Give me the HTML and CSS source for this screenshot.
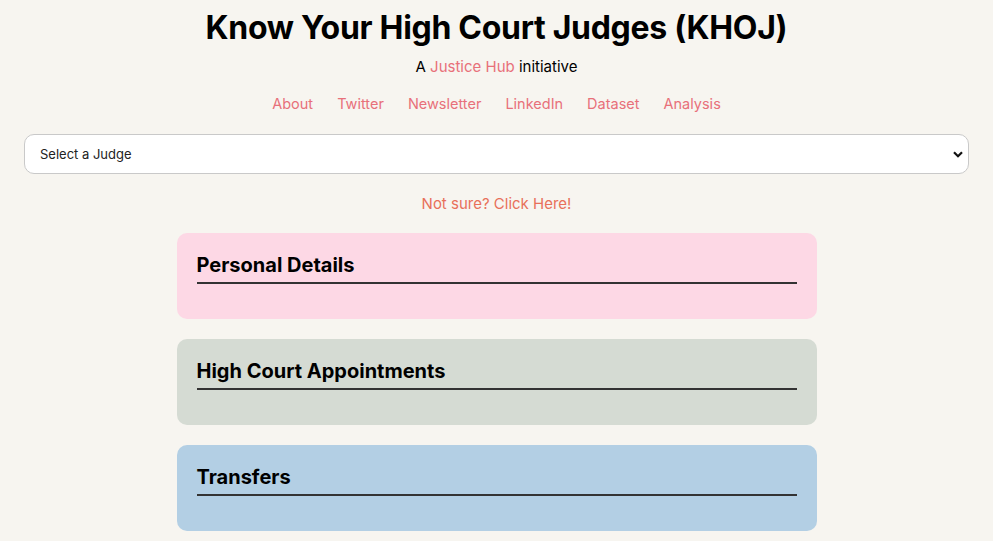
FILE: index.html
```html
<!DOCTYPE html>
<html lang="en">
<head>
<meta charset="utf-8">
<title>KHOJ</title>
<link rel="stylesheet" href="styles.css">
</head>
<body>
<header class="header">
  <h1 class="title">Know Your High Court Judges (KHOJ)</h1>
  <p class="subtitle">A <a class="accent" href="#">Justice Hub</a> initiative</p>
  <nav class="nav">
    <a href="#">About</a>
    <a href="#">Twitter</a>
    <a href="#">Newsletter</a>
    <a href="#">LinkedIn</a>
    <a href="#">Dataset</a>
    <a href="#">Analysis</a>
  </nav>
</header>
<div class="select-wrap">
  <div class="select">
    <span class="select-label">Select a Judge</span>
    <svg class="chev" width="10" height="7" viewBox="0 0 10 7"><path d="M1 1.2 L5 5.2 L9 1.2" fill="none" stroke="#111" stroke-width="2.2"/></svg>
  </div>
</div>
<p class="unsure"><a href="#">Not sure? Click Here!</a></p>
<main class="cards">
  <section class="card pink"><h2>Personal Details</h2></section>
  <section class="card grey"><h2>High Court Appointments</h2></section>
  <section class="card blue"><h2>Transfers</h2></section>
</main>
</body>
</html>
```
FILE: styles.css
```css
* { box-sizing: border-box; }
body {
  margin: 0;
  background: #f7f5f0;
  font-family: Inter, "Noto Sans", sans-serif;
  color: #000;
}
a { text-decoration: none; }
.header { text-align: center; padding-top: 8px; }
.title {
  margin: 0;
  font-size: 32px;
  font-weight: 700;
  line-height: 40px;
  letter-spacing: -0.3px;
}
.subtitle {
  margin: 9px 0 0;
  font-size: 15px;
  line-height: 20px;
}
.accent { color: #e8707a; }
.nav {
  display: flex;
  justify-content: center;
  gap: 24px;
  margin-top: 17px;
  font-size: 14.5px;
  line-height: 20px;
}
.nav a { color: #e8707a; }
.select-wrap { padding: 20px 24px 0; }
.select {
  height: 40px;
  background: #fff;
  border: 1px solid #c9c9c9;
  border-radius: 10px;
  display: flex;
  align-items: center;
  justify-content: space-between;
  padding: 0 5px 0 15px;
  font-size: 13px;
  color: #222;
}
.unsure {
  text-align: center;
  margin: 20px 0 0;
  font-size: 15px;
  line-height: 20px;
}
.unsure a { color: #e8705a; }
.cards {
  display: flex;
  flex-direction: column;
  align-items: center;
  gap: 20px;
  margin-top: 19px;
}
.card {
  width: 640px;
  height: 86px;
  border-radius: 10px;
  padding: 20px 20px 0;
}
.card h2 {
  margin: 0;
  font-size: 20px;
  font-weight: 700;
  line-height: 24px;
  padding-bottom: 5px;
  border-bottom: 2px solid #333;
}
.pink { background: #fdd8e5; }
.grey { background: #d5dbd3; }
.blue { background: #b3cfe4; }
```
